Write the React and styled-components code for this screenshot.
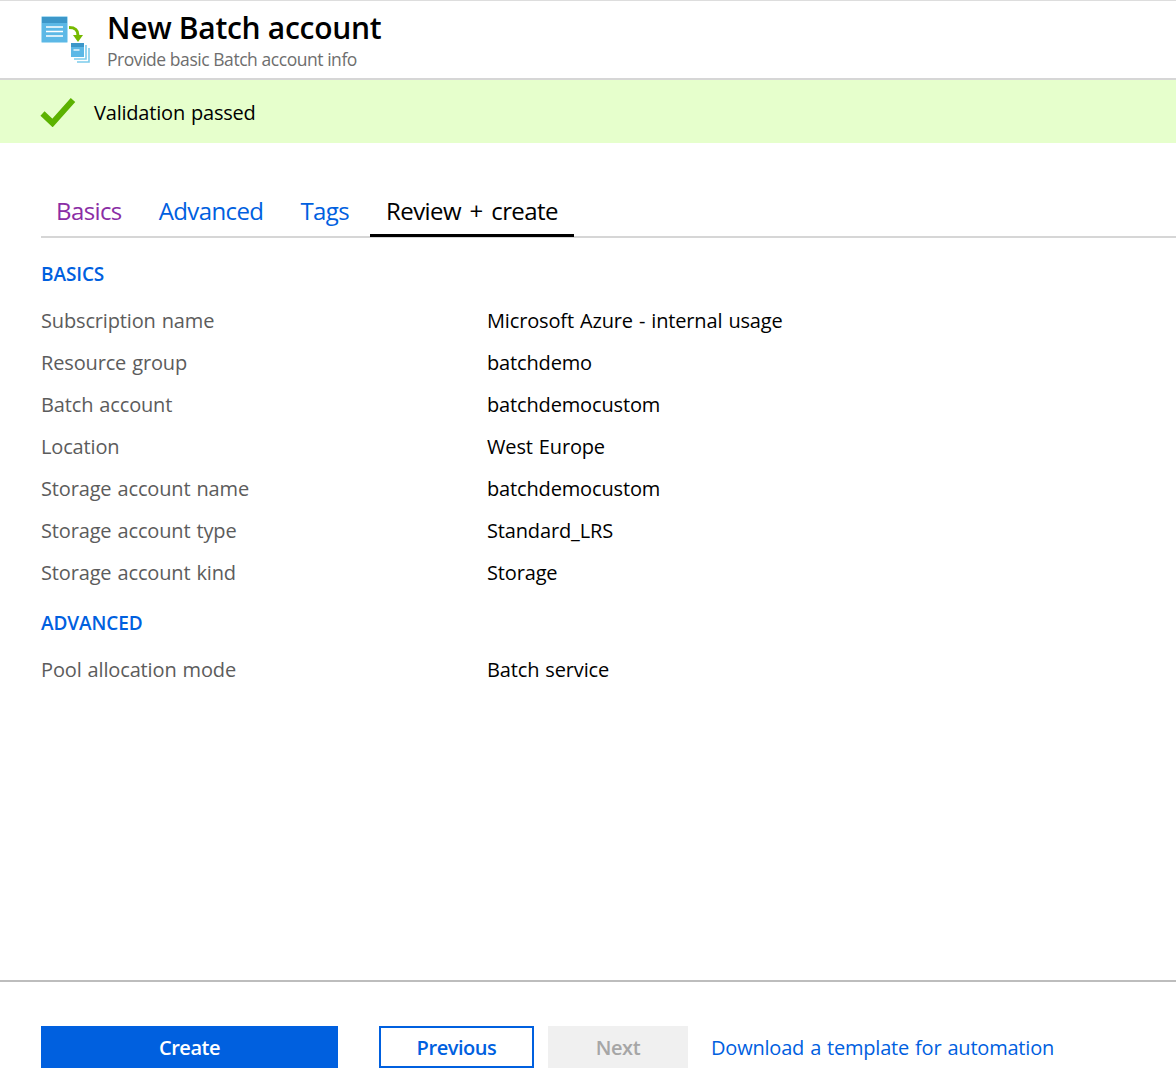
import React from 'react';
import styled, { createGlobalStyle } from 'styled-components';

const GlobalStyle = createGlobalStyle`
   html, body {
      margin: 0;
      padding: 0;
      background: #fff;
      font-family: "Open Sans", "Noto Sans", sans-serif;
   }
`;

const basics = [
   ['Subscription name', 'Microsoft Azure - internal usage'],
   ['Resource group', 'batchdemo'],
   ['Batch account', 'batchdemocustom'],
   ['Location', 'West Europe'],
   ['Storage account name', 'batchdemocustom'],
   ['Storage account type', 'Standard_LRS'],
   ['Storage account kind', 'Storage'],
];

const BatchIcon = () => (
   <svg width="50" height="50" viewBox="0 0 50 50">
      <rect x="0.5" y="1.5" width="26" height="26" rx="1" fill="#5cb8e6" stroke="#a9dcf3" />
      <rect x="1" y="2" width="25" height="6" fill="#3c97c9" />
      <path d="M5 12h17M5 16.5h17M5 21h17" stroke="#fff" strokeWidth="1.5" />
      <path d="M28 12.5c6 0 9 2 9 8" fill="none" stroke="#76b900" strokeWidth="3" />
      <path d="M32 20h10l-5 7z" fill="#76b900" />
      <path d="M48 33v14H36" fill="none" stroke="#7ccbec" strokeWidth="1.6" />
      <path d="M45 30v14H33" fill="none" stroke="#7ccbec" strokeWidth="1.6" />
      <rect x="30" y="28" width="13" height="14" fill="#5cb8e6" />
      <rect x="30" y="28" width="13" height="4" fill="#3c97c9" />
      <path d="M32.500 35h6" stroke="#fff" strokeWidth="1.300" />
   </svg>
);

const CheckIcon = () => (
   <svg width="36" height="30" viewBox="0 0 36 30">
      <path d="M2.500 16.500L12.500 26L33 3" fill="none" stroke="#5bb200" strokeWidth="6" />
   </svg>
);

const App = () => {
   return (
      <Page>
         <GlobalStyle />
         <Header>
            <BatchIcon />
            <Titles>
               <Title>New Batch account</Title>
               <Subtitle>Provide basic Batch account info</Subtitle>
            </Titles>
         </Header>
         <Banner>
            <CheckIcon />
            <span>Validation passed</span>
         </Banner>
         <Tabs>
            <Tab $color="#8a2da5">Basics</Tab>
            <Tab>Advanced</Tab>
            <Tab>Tags</Tab>
            <Tab $active>Review + create</Tab>
         </Tabs>
         <Content>
            <SectionTitle>BASICS</SectionTitle>
            {basics.map(([label, value]) => (
               <Row key={label}>
                  <Label>{label}</Label>
                  <Value>{value}</Value>
               </Row>
            ))}
            <SectionTitle $second>ADVANCED</SectionTitle>
            <Row>
               <Label>Pool allocation mode</Label>
               <Value>Batch service</Value>
            </Row>
         </Content>
         <Footer>
            <PrimaryButton>Create</PrimaryButton>
            <OutlineButton>Previous</OutlineButton>
            <DisabledButton>Next</DisabledButton>
            <TemplateLink>Download a template for automation</TemplateLink>
         </Footer>
      </Page>
   )
};

const Page = styled.div`
   width: 1176px;
   height: 1091px;
   display: flex;
   flex-direction: column;
   overflow: hidden;
   border-top: 1px solid #ddd;
   box-sizing: border-box;
`;

const Header = styled.header`
   flex: none;
   height: 79px;
   display: flex;
   gap: 16px;
   padding: 14px 0 0 41px;
   box-sizing: border-box;
   border-bottom: 2px solid #d6d6d6;
`;

const Titles = styled.div`
   display: flex;
   flex-direction: column;
`;

const Title = styled.h1`
   margin: -3px 0 0;
   font-size: 30px;
   line-height: 32px;
   font-weight: 600;
   color: #000;
   letter-spacing: -0.3px;
`;

const Subtitle = styled.div`
   margin-top: 3px;
   font-size: 17.5px;
   line-height: 24px;
   color: #6e6e6e;
   letter-spacing: -0.45px;
`;

const Banner = styled.div`
   flex: none;
   height: 63px;
   background: #e6ffcc;
   display: flex;
   align-items: center;
   gap: 18px;
   padding-left: 40px;
   font-size: 20px;
   line-height: 28px;
   color: #000;
   letter-spacing: -0.2px;
   word-spacing: 1px;

   span {
      padding-top: 2px;
   }
`;

const Tabs = styled.nav`
   flex: none;
   margin: 38px 0 0 41px;
   height: 57px;
   box-sizing: border-box;
   display: flex;
   border-bottom: 2px solid #d6d6d6;
`;

const Tab = styled.a`
   height: 56px;
   box-sizing: border-box;
   padding: 12px 16px 0;
   margin-left: ${p => (p.$color ? '-1px' : '0')};
   margin-right: ${p => (p.$active ? '0' : '5px')};
   font-size: 24px;
   line-height: 36px;
   letter-spacing: -0.6px;
   word-spacing: 3px;
   color: ${p => (p.$active ? '#000' : p.$color || '#0060df')};
   border-bottom: ${p => (p.$active ? '3px solid #000' : 'none')};
`;

const Content = styled.main`
   flex: 1;
   padding: 22px 0 0 41px;
`;

const SectionTitle = styled.h2`
   margin: ${p => (p.$second ? '16px 0 11px' : '0 0 11px')};
   font-size: 19px;
   line-height: 28px;
   font-weight: 600;
   color: #0060df;
   letter-spacing: -0.1px;
`;

const Row = styled.div`
   display: grid;
   grid-template-columns: 446px 1fr;
   height: 42px;
   align-items: center;
   font-size: 20px;
   letter-spacing: -0.15px;
   word-spacing: 1px;
`;

const Label = styled.div`
   color: #5c5c5c;
`;

const Value = styled.div`
   color: #000;
`;

const Footer = styled.footer`
   flex: none;
   height: 111px;
   box-sizing: border-box;
   border-top: 2px solid #bdbdbd;
   padding: 44px 0 0 41px;
   display: flex;
   align-items: flex-start;
   font-size: 20px;
   letter-spacing: -0.2px;
   word-spacing: 1px;
`;

const Button = styled.button`
   height: 42px;
   box-sizing: border-box;
   padding: 0;
   font-family: inherit;
   font-size: 20px;
   font-weight: 600;
   letter-spacing: -0.45px;
`;

const PrimaryButton = styled(Button)`
   width: 297px;
   margin-right: 41px;
   border: none;
   background: #0060df;
   color: #fff;
`;

const OutlineButton = styled(Button)`
   width: 155px;
   margin-right: 14px;
   border: 2px solid #0060df;
   background: #fff;
   color: #0060df;
`;

const DisabledButton = styled(Button)`
   width: 140px;
   margin-right: 23px;
   border: none;
   background: #f0f0f0;
   color: #a6a6a6;
`;

const TemplateLink = styled.a`
   line-height: 44px;
   color: #0060df;
`;

export default App
